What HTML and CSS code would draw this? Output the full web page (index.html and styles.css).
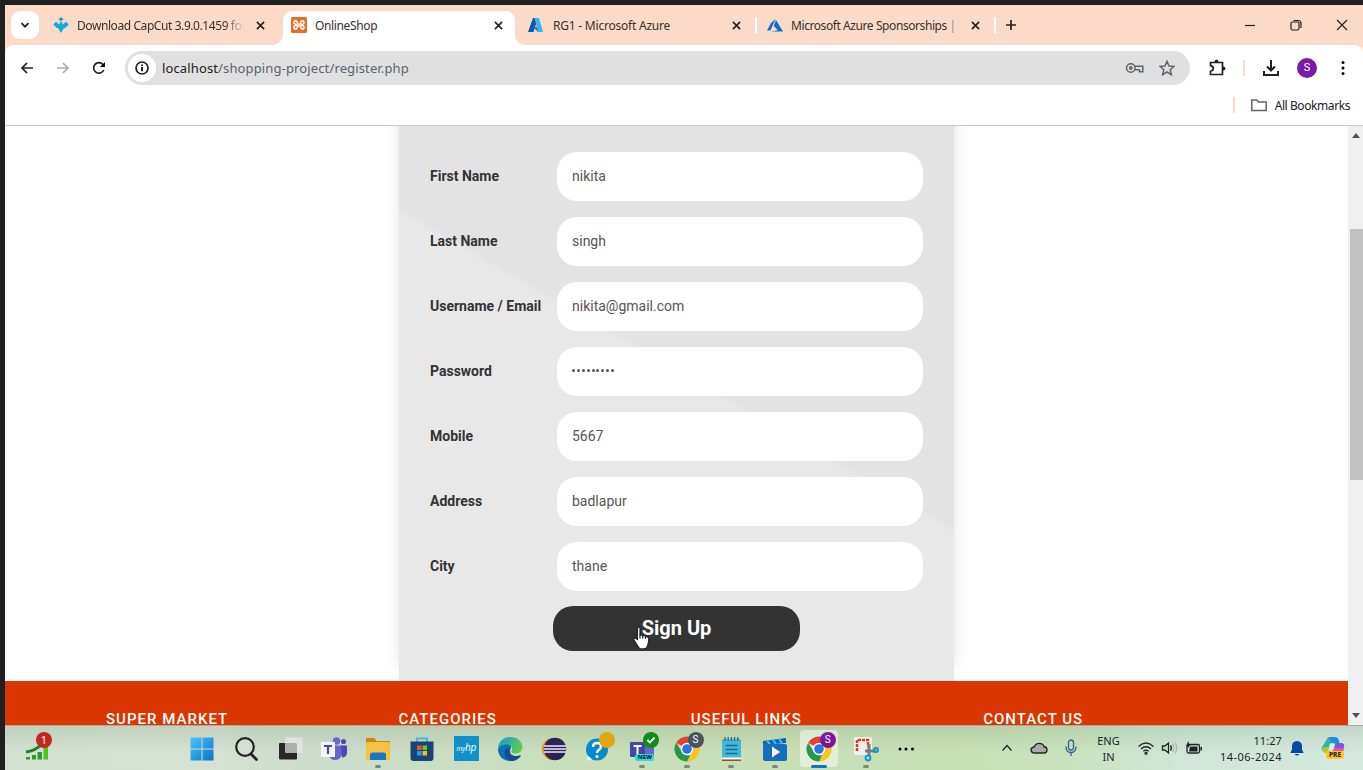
FILE: index.html
```html
<!DOCTYPE html>
<html lang="en">
<head>
<meta charset="utf-8">
<title>OnlineShop</title>
<link rel="stylesheet" href="styles.css">
</head>
<body>
<div class="window">
  <header class="tabs">
    <button class="tab-search"><svg width="12" height="12" viewBox="0 0 12 12"><path d="M2.500 4.200 6 7.700l3.500-3.500" class="ln2"/></svg></button>
    <div class="tab tab-first">
      <svg class="fav" viewBox="0 0 16 16"><path fill="#13a9d8" d="m8 0 2.500 2.300L8 4.600 5.500 2.300zM.300 7.500 3 4.800l2.800 2.400h1V5h2.400v2.200h1L13 4.800l2.700 2.700-3.500 3.500H11L8 16l-3-5H3.800z"/></svg>
      <span class="tab-title fade t1">Download CapCut 3.9.0.1459 for</span>
      <svg class="x" viewBox="0 0 10 10"><path d="m1 1 8 8M9 1 1 9"/></svg>
    </div>
    <div class="tab tab-active">
      <svg class="fav" viewBox="0 0 16 16"><rect width="16" height="16" rx="1.500" fill="#e56f20"/><path d="M6.300 7V5.300a1.700 1.700 0 1 0-1.900 1.900L5.300 8l-.9.800a1.700 1.700 0 1 0 1.900 1.900V9h3.400v1.700a1.700 1.700 0 1 0 1.900-1.900L10.700 8l.9-.8a1.700 1.700 0 1 0-1.900-1.900V7z" fill="none" stroke="#fff" stroke-width="1.500"/></svg>
      <span class="tab-title t2">OnlineShop</span>
      <svg class="x" viewBox="0 0 10 10"><path d="m1 1 8 8M9 1 1 9"/></svg>
    </div>
    <div class="tab tab-third">
      <svg class="fav" viewBox="0 0 16 16"><path fill="#1257a5" d="M5 1h5L5.500 15H0z"/><path fill="#1779d4" d="M5 10h7l2 5h-4z"/><path fill="#38b7ee" d="M6.500 1H11l4 14h-5z"/></svg>
      <span class="tab-title t3">RG1 - Microsoft Azure</span>
      <svg class="x" viewBox="0 0 10 10"><path d="m1 1 8 8M9 1 1 9"/></svg>
    </div>
    <i class="tab-sep"></i>
    <div class="tab tab-fourth">
      <svg class="fav" viewBox="0 0 16 16"><path fill="#0b72d0" d="M8.500 2 4 6 0 13.500h3.500zM9 3 6.700 8.800l4 4.500L4 14.500h12z"/></svg>
      <span class="tab-title t4">Microsoft Azure Sponsorships <em>|</em></span>
      <svg class="x" viewBox="0 0 10 10"><path d="m1 1 8 8M9 1 1 9"/></svg>
    </div>
    <i class="tab-sep"></i>
    <svg class="plus" width="12" height="12" viewBox="0 0 12 12"><path class="ln2" d="M6 1v10M1 6h10"/></svg>
    <div class="controls">
      <svg viewBox="0 0 12 12"><path d="M1 6.500h10"/></svg>
      <svg viewBox="0 0 12 12"><rect x="1" y="3" width="8" height="8" rx="1.500"/><path d="M3.500 1.500H8A3 3 0 0 1 11 4.500V9"/></svg>
      <svg viewBox="0 0 12 12"><path d="m1 1 10 10M11 1 1 11"/></svg>
    </div>
  </header>

  <nav class="toolbar">
    <div class="navs">
      <svg viewBox="0 0 16 16"><path class="ln2" d="M14 8H3M8 3 3 8l5 5"/></svg>
      <svg class="dim" viewBox="0 0 16 16"><path class="ln2" d="M2 8h11M8 3l5 5-5 5"/></svg>
      <svg viewBox="0 0 16 16"><path class="ln2" d="M12.800 10A5.300 5.300 0 1 1 12 4.500L13.500 6"/><path d="M14 2v5H9z"/></svg>
    </div>
    <div class="omnibox">
      <span class="info"><svg width="16" height="16" viewBox="0 0 16 16"><circle cx="8" cy="8" r="6" class="ln2"/><path d="M7.200 7h1.700v4.300H7.200zM7.200 4.500h1.700V6H7.200z"/></svg></span>
      <span class="url"><b>localhost</b>/shopping-project/register.php</span>
      <svg class="key" width="20" height="12" viewBox="0 0 20 12"><circle cx="5.800" cy="6" r="4.300"/><circle cx="5.800" cy="6" r="1.200"/><path d="M9.600 4.200h8.200v5.500h-3.300V7.800H9.800"/></svg>
      <svg class="star" width="16" height="16" viewBox="0 0 16 16"><path d="m8 1.300 2 4.700 5 .4-3.800 3.300 1.200 5L8 12l-4.400 2.700 1.200-5L1 6.400 6 6z"/></svg>
    </div>
    <svg class="puzzle" width="18" height="18" viewBox="0 0 18 18"><path d="M2.500 3.500h12v12h-12v-3.300q2.800-.7 2.800-2.800t-2.800-2.800z"/><path class="fill" d="M6.500 3q0-2.500 2-2.500t2 2.500zM15 7.500q2.500 0 2.500 2t-2.500 2z"/></svg>
    <i class="bar-sep"></i>
    <svg class="download" width="18" height="18" viewBox="0 0 18 18"><path d="M9 1v10M5 7.500 9 11.500l4-4M2 12v4h14v-4"/></svg>
    <span class="avatar">S</span>
    <svg class="dots" width="6" height="16" viewBox="0 0 6 16"><circle cx="3" cy="2.500" r="1.500"/><circle cx="3" cy="8" r="1.500"/><circle cx="3" cy="13.500" r="1.500"/></svg>
  </nav>

  <div class="bookmarks">
    <i class="bar-sep"></i>
    <svg width="18" height="14" viewBox="0 0 18 14"><path d="M1.800 2h5l2 2h7.400v8.500H1.800z"/></svg>
    <span>All Bookmarks</span>
  </div>

  <main class="viewport">
    <div class="page">
      <section class="form-area">
        <form class="card">
          <label class="row"><span>First Name</span><input type="text" value="nikita"></label>
          <label class="row"><span>Last Name</span><input type="text" value="singh"></label>
          <label class="row"><span>Username / Email</span><input type="text" value="nikita@gmail.com"></label>
          <label class="row"><span>Password</span><span class="field"><i></i><i></i><i></i><i></i><i></i><i></i><i></i><i></i><i></i></span></label>
          <label class="row"><span>Mobile</span><input type="text" value="5667"></label>
          <label class="row"><span>Address</span><input type="text" value="badlapur"></label>
          <label class="row"><span>City</span><input type="text" value="thane"></label>
          <button type="button" class="signup">Sign Up
            <svg class="cursor" width="18" height="25" viewBox="0 0 18 25"><path d="M4.500 1.500q2-1 2.500 1V9l2 .2 2 .5 2 .5 2.300 1.300q.7 1 .4 3l-.7 4-1.500 3.500-4 1-3-.5-2-3L1 14q-.5-2 1-2l2.500 1.500z"/><path class="finger" d="M7 8.500v4M9.700 9v3.500M12.500 10v3"/></svg>
          </button>
        </form>
      </section>
      <footer class="footer">
        <h3>SUPER MARKET</h3><h3>CATEGORIES</h3><h3>USEFUL LINKS</h3><h3>CONTACT US</h3>
      </footer>
    </div>
    <aside class="scroll"><i class="up"></i><i class="thumb"></i><i class="down"></i></aside>
  </main>

  <div class="taskbar">
    <div class="widget">
      <svg width="30" height="32" viewBox="0 0 30 32"><path fill="#2c9b2b" d="M2 28h4v2.500H2zM8 26h4v4.500H8zM13.500 23h4.500v7.500h-4.500z"/><path fill="#4dc51e" d="M19.500 18H24v12.500h-4.500z"/><path d="M2 23q9-1 16-8" fill="none" stroke="#17842d" stroke-width="3"/></svg>
      <span class="count">1</span>
    </div>
    <div class="apps">
      <span class="app"><svg viewBox="0 0 26 26"><defs><linearGradient id="win" x2="1" y2="1"><stop stop-color="#4dc6f4"/><stop offset="1" stop-color="#0872ce"/></linearGradient></defs><path fill="url(#win)" d="M1.500 1.500h11v11h-11zM13.500 1.500h11v11h-11zM1.500 13.500h11v11h-11zM13.500 13.500h11v11h-11z"/></svg></span>
      <span class="app"><svg viewBox="0 0 26 26"><circle cx="12" cy="11" r="8.800" fill="#d4dfd3" stroke="#222" stroke-width="2.200"/><path d="m18 18 5.500 5.500" stroke="#222" stroke-width="2.800" stroke-linecap="round"/></svg></span>
      <span class="app"><svg viewBox="0 0 26 26"><rect x="2" y="7" width="18" height="16.500" rx="1" fill="#272727"/><rect x="8" y="1.500" width="17.500" height="15.500" rx="1" fill="#e8e8e8" opacity=".7"/></svg></span>
      <span class="app"><svg viewBox="0 0 26 26"><circle cx="15.500" cy="5" r="3.700" fill="#6668d0"/><circle cx="22.500" cy="5.500" r="2.600" fill="#4c50b6"/><path fill="#6366ca" d="M9 9.500h12V19q-2 5-7 5t-6-5z"/><path fill="#474bb0" d="M20 9.500h6v8q-1 4-5 4z"/><rect y="6" width="14" height="15" fill="#f4f4fb"/><path d="M3 10h8M7 10v8" stroke="#4549ad" stroke-width="2.200"/></svg></span>
      <span class="app run"><svg viewBox="0 0 26 26"><path fill="#c98910" d="M1 2h8l3 3h13v6H1z"/><rect x="1" y="6" width="24" height="18" rx="1" fill="#f5c143"/><path fill="#1876c7" d="M5 24v-5q0-2.500 2.500-2.500h11q2.500 0 2.500 2.500v5z"/></svg></span>
      <span class="app"><svg viewBox="0 0 26 26"><path d="M8 6V2.500h10V6" fill="none" stroke="#44b9e9" stroke-width="2"/><path fill="#174570" d="M1.500 5.500h23V22q0 3-3 3h-17q-3 0-3-3z"/><path fill="#f0502f" d="M8 9.500h4.500V14H8z"/><path fill="#75bd31" d="M13.500 9.500H18V14h-4.500z"/><path fill="#1da3e2" d="M8 15h4.500v4.500H8z"/><path fill="#f8be23" d="M13.500 15H18v4.500h-4.500z"/></svg></span>
      <span class="app"><span class="hp"><small>my</small>hp</span></span>
      <span class="app"><svg viewBox="0 0 26 26"><defs><linearGradient id="edge" x2="1" y2=".5"><stop stop-color="#1597d8"/><stop offset="1" stop-color="#5ecb52"/></linearGradient></defs><path fill="#0e6cba" d="M1 13c0 7 5 12 12 12 5 0 9-2 11-6-3 2-11 2-11-4 0-2 2-3 1-5-3-4-11-3-13 3z"/><path fill="#164a8d" d="M10 12c-4 3-3 11 4 13 4 0 8-2 10-6-4 2-13 2-11-5z"/><path fill="url(#edge)" d="M1 13C1 6 6 1 13 1c8 0 12.500 5 12.500 10 0 4-3 6.500-7 6.500-3 0-5-1-4-2.500 2-2 0-6-4-6.500-4-.5-8 1.500-9.500 4.500z"/></svg></span>
      <span class="app"><svg viewBox="0 0 26 26"><circle cx="11.800" cy="13" r="11" fill="#ed962b"/><circle cx="14" cy="13" r="11.200" fill="#2c2255"/><path d="M3 10h22M3 13h22M3 16h22" stroke="#eeebf4" stroke-width="1.700"/></svg></span>
      <span class="app"><svg viewBox="0 0 26 26"><circle cx="12" cy="13.500" r="11" fill="#078acb"/><path d="M8 11q0-4 4-4t4 3.500q0 2-2 3.200-2 1.300-2 3.300" fill="none" stroke="#fff" stroke-width="2.500"/><circle cx="12" cy="20.500" r="1.600" fill="#fff"/><path fill="#eef8fc" d="m3 20-2 5 6-2z"/></svg><b class="badge gold"></b></span>
      <span class="app run"><svg viewBox="0 0 26 26"><circle cx="18" cy="5" r="4" fill="#676acd"/><path fill="#6669cb" d="M11 9h14v10q-1 4-6 4t-8-4z"/><rect x="1" y="6" width="15" height="15" rx="1" fill="#4347a9"/><path d="M4.500 10h8M8.500 10v8" stroke="#fff" stroke-width="2"/></svg><b class="badge green"><svg viewBox="0 0 10 10"><path d="m2 5 2 2 4-4"/></svg></b><small class="new">NEW</small></span>
      <span class="app run"><svg viewBox="0 0 26 26"><g id="chrome"><path fill="#e63e31" d="M13 13 2.200 6.700A12.500 12.500 0 0 1 23.800 6.700z"/><path fill="#fac51c" d="M13 7h11a12.500 12.500 0 0 1-10.800 18.500L18 15z"/><path fill="#26974b" d="M13.200 25.500A12.500 12.500 0 0 1 2.200 6.700L8 16q2 4 8 3z"/><circle cx="13" cy="13" r="6.200" fill="#fff"/><circle cx="13" cy="13" r="4.800" fill="#2977e5"/></g></svg><b class="badge slate">S</b></span>
      <span class="app run"><svg viewBox="0 0 26 26"><rect x="4" y="3" width="19" height="20" rx="1.500" fill="#43b8df"/><path d="M7 1v4M10.200 1v4M13.400 1v4M16.600 1v4M19.800 1v4" stroke="#276e85" stroke-width="1.300"/><path d="M7.500 9.500h12M7.500 13.500h12M7.500 17.500h12" stroke="#176b91" stroke-width="1.500"/><path fill="#fff" d="M4 21.500h19v2H4z"/><path fill="#9b4d25" d="M4 23.500h19V25H4z"/></svg></span>
      <span class="app run"><svg viewBox="0 0 26 26"><path fill="#096aaf" d="m1 5 23-3v5L1 9z"/><path d="m5 5 3 3m3-4 3 4m3-5 3 4" stroke="#44c3e9" stroke-width="2"/><rect x="1" y="8" width="24" height="17" rx="2" fill="#176db9"/><path fill="#fff" d="m10 10.500 8 5.500-8 5.500z"/></svg></span>
      <span class="app run current"><svg viewBox="0 0 26 26"><use href="#chrome"/></svg><b class="badge purple">S</b></span>
      <span class="app run snip"><svg viewBox="0 0 26 26"><rect x="1" y="1" width="18" height="18" rx="2" fill="#f4efec"/><path d="M4 15V4h11v7" fill="none" stroke="#d73b1c" stroke-width="2.500" stroke-dasharray="3 1"/><path d="M12 15h11M16 8v12" stroke="#777f86" stroke-width="3"/><circle cx="15" cy="22" r="2.400" fill="none" stroke="#1596d1" stroke-width="2"/><circle cx="23" cy="14" r="2" fill="none" stroke="#1596d1" stroke-width="2"/></svg></span>
      <span class="app more"><svg viewBox="0 0 26 26"><circle cx="7" cy="13" r="1.500"/><circle cx="13" cy="13" r="1.500"/><circle cx="19.500" cy="13" r="1.500"/></svg></span>
    </div>
    <div class="tray">
      <svg class="tray-up" width="12" height="12" viewBox="0 0 12 12"><path d="m1.500 8.500 4.500-5 4.500 5"/></svg>
      <svg class="cloud" width="18" height="12" viewBox="0 0 18 12"><path d="M4 11Q1 10.500 1 8t3-3q2-4 5.500-3.700Q13 1.300 14 4.500q3 .5 3 3.500t-3 3z"/></svg>
      <svg class="mic" width="14" height="18" viewBox="0 0 14 18"><rect x="4.500" y="1" width="5" height="10" rx="2.500"/><path d="M2 7.500q0 6 5 6t5-6M7 13.500V17"/></svg>
      <span class="lang">ENG<br>IN</span>
      <svg class="wifi" width="18" height="14" viewBox="0 0 18 14"><path d="M1.500 5.500Q9-1.500 16.500 5.500M4 8q5-4.500 10 0M6.300 10.300q2.700-2.300 5.400 0"/><circle cx="9" cy="12.200" r="1"/></svg>
      <svg class="sound" width="18" height="14" viewBox="0 0 18 14"><path d="M1.500 5h2.300L7.500 2v10L3.800 9H1.500zM9.500 4.500q1.800 2.500 0 5"/><path class="faint" d="M11.500 3q3 4 0 8M14 1.500q3.500 5.500 0 11"/></svg>
      <svg class="battery" width="18" height="14" viewBox="0 0 18 14"><rect x="2" y="3.500" width="12.500" height="8.500" rx="1.500"/><path class="fill" d="M5 5.500h7.500v5H4zM15.500 6h1.500v3.500h-1.500zM3.500 0 1 5h2L1.800 8 6 3.500H4z"/></svg>
      <span class="clock"><span class="time">11:27</span><br>14-06-2024</span>
      <svg class="bell" width="14" height="17" viewBox="0 0 14 17"><path fill="#0749a0" d="M7 1q5 .3 5 5v3.500l1.700 3.500H.300L2 9.500V6Q2 1.300 7 1zM4.500 14h5q-2.500 3-5 0z"/></svg>
      <span class="copilot"><svg width="24" height="22" viewBox="0 0 24 22"><path fill="#1791dc" d="M6 2q1-2 3-2h5q3 0 4 4l.5 3H9z"/><path fill="#2eb5a9" d="M6 2q2-1 4 1L7 13H1q-1-2 0-3z"/><path fill="#aac744" d="M2 10h6l-2 6H4q-4-1-2-6z"/><path fill="#7b55e3" d="M14 6h7q3 1 2 4l-1 3h-9z"/><path fill="#e551a4" d="M13 11h10q-1 7-5 7h-8z"/><path fill="#e8a53b" d="m5 13 6 1-1 4H6q-2-2-1-5z"/><path fill="#d8ebdf" d="m9.500 6 4.500.5-2.500 7-4-.5z"/></svg><small>PRE</small></span>
    </div>
  </div>
</div>
</body>
</html>
```

FILE: styles.css
```css
* { box-sizing: border-box; }
body { margin: 0; background: #202020; font-family: "Noto Sans", "Open Sans", sans-serif; color: #222; overflow: hidden; }
button { border: 0; padding: 0; }
svg { display: block; flex: none; }
.window { display: flex; flex-direction: column; width: 1363px; height: 770px; padding: 5px 0 0 5px; }
.ln2 { fill: none; stroke: currentColor; stroke-width: 1.700; }

.tabs { height: 40px; flex: none; display: flex; align-items: center; background: #fcdac8; padding-left: 6px; }
.tab-search { width: 28px; height: 28px; border-radius: 9px; background: #fff; display: grid; place-items: center; color: #222; }
.tab { display: flex; align-items: center; height: 34px; font-size: 12px; color: #3a302d; }
.fav { width: 16px; height: 16px; margin-right: 8px; }
.tab-title { flex: 1; white-space: nowrap; overflow: hidden; line-height: 18px; padding-top: 1px; }
.tab-title em { font-style: normal; color: #9c8780; }
.fade { -webkit-mask-image: linear-gradient(90deg, #000 88%, transparent); mask-image: linear-gradient(90deg, #000 88%, transparent); }
.x { width: 9px; height: 9px; fill: none; stroke: #222; stroke-width: 1.800; }
.tab-first { width: 230px; margin-left: 14px; padding-right: 17px; }
.tab-first .fade { flex: 0 0 167px; margin-right: 12px; }
.tab-active { position: relative; align-self: flex-end; width: 232px; padding: 0 12px 6px 8px; background: #fff; border-radius: 9px 9px 0 0; }
.tab-active::before, .tab-active::after { content: ""; position: absolute; bottom: 0; width: 10px; height: 10px; }
.tab-active::before { left: -10px; background: radial-gradient(circle at 0 0, transparent 9.500px, #fff 10px); }
.tab-active::after { right: -10px; background: radial-gradient(circle at 100% 0, transparent 9.500px, #fff 10px); }
.tab-third { width: 240px; padding: 0 14px 0 14px; }
.tab-third .fav { margin-left: -1px; margin-right: 9px; }
.tab-sep { width: 2px; height: 16px; background: #fff; }
.tab-fourth { width: 237px; padding: 0 14px 0 10px; }
.plus { margin-left: 9px; }
.controls { margin-left: auto; display: flex; gap: 34px; padding-right: 15px; }
.controls svg { width: 12px; height: 12px; fill: none; stroke: #222; stroke-width: 1.200; }
.t1 { letter-spacing: -.42px; }
.t2 { letter-spacing: -.36px; }
.t3 { letter-spacing: -.22px; }
.t4 { letter-spacing: -.42px; }

.toolbar { flex: none; height: 46px; background: #fff; border-radius: 8px 8px 0 0; display: flex; align-items: center; box-shadow: 0 -8px #fcdac8; clip-path: inset(0); }
.navs { display: flex; gap: 20px; width: 120px; padding-left: 14px; }
.navs svg { width: 16px; height: 16px; }
.dim { color: #aaa; }
.omnibox { width: 1065px; height: 34px; border-radius: 17px; background: #e0e0e0; display: flex; align-items: center; padding: 0 15px 0 3px; }
.info { width: 28px; height: 28px; border-radius: 50%; background: #fff; display: grid; place-items: center; }
.url { flex: 1; margin-left: 6px; font-size: 13px; letter-spacing: .13px; color: #566370; }
.url b { font-weight: 400; color: #202124; }
.key, .star { fill: none; stroke: #61666b; stroke-width: 1.500; }
.star { margin-left: 14px; }
.puzzle { margin-left: 18px; fill: none; stroke: #202020; stroke-width: 1.700; }
.puzzle .fill { fill: #202020; stroke: none; }
.bar-sep { width: 2px; height: 16px; background: #fcdac8; }
.toolbar .bar-sep { margin-left: 17px; }
.download { margin-left: 17px; fill: none; stroke: #202020; stroke-width: 2; }
.avatar { width: 20px; height: 20px; margin-left: 17px; border-radius: 50%; background: #7a1ba3; color: #fff; font: 11px/20px Roboto, sans-serif; text-align: center; }
.dots { margin-left: 23px; }
.bookmarks { flex: none; height: 35px; background: #fff; border-bottom: 1px solid #c9c9c9; display: flex; align-items: center; justify-content: flex-end; padding: 0 13px 7px 0; font-size: 12px; }
.bookmarks svg { margin: 0 7px 0 15px; fill: none; stroke: #656565; stroke-width: 1.500; }
.bookmarks span { letter-spacing: -.42px; padding-top: 1px; }

.viewport { flex: none; height: 599px; display: flex; background: #fff; overflow: hidden; font-family: Roboto, sans-serif; }
.page { width: 1343px; }
.form-area { height: 555px; overflow: hidden; }
.card { width: 555px; height: 555px; margin-left: 394px; padding: 25px 31px 30px; background: linear-gradient(30deg, #e8e8e8 53.400%, #e3e3e3 54.200%); box-shadow: 0 -15px 14px rgba(0,0,0,.12); }
.row { display: flex; align-items: center; height: 50px; margin-bottom: 15px; font-size: 14px; font-weight: 700; color: #333; }
.row > span:first-child { width: 127px; white-space: nowrap; }
.row input, .field { width: 366px; height: 49px; border: 0; outline: 0; border-radius: 20px; background: #fff; padding: 0 15px; font: 14px Roboto, sans-serif; color: #555; }
.field { display: flex; align-items: center; gap: 1.900px; padding-bottom: 1px; }
.field i { width: 3px; height: 3px; border-radius: 50%; background: #555; }
.signup { position: relative; display: block; width: 247px; height: 45px; margin-left: 123px; border-radius: 20px; background: #333; color: #fff; font: 700 20px/45px Roboto, sans-serif; }
.cursor { position: absolute; left: 80px; top: 20px; fill: #fff; stroke: #20222e; stroke-width: 1.200; }
.finger { fill: none; }
.footer { height: 44px; background: #db3500; display: grid; grid-template-columns: repeat(4, 292.400px); padding: 32px 0 0 101px; }
.footer h3 { margin: 0; color: #fff; font-size: 15px; font-weight: 500; line-height: 12px; letter-spacing: 1.020px; }
.scroll { width: 15px; display: flex; flex-direction: column; align-items: center; background: #f0f0f0; }
.up, .down { width: 0; height: 0; border: 4px solid transparent; }
.up { border-bottom: 5px solid #505050; border-top: 0; margin-top: 7px; }
.thumb { width: 13px; height: 251px; margin-top: 91px; align-self: flex-end; background: #c1c1c1; }
.down { border-top: 5px solid #505050; border-bottom: 0; margin-top: auto; margin-bottom: 7px; }

.taskbar { flex: none; height: 45px; display: flex; border-top: 1px solid #a5af98; background: linear-gradient(180deg, rgba(130,150,120,.22), transparent 60%), linear-gradient(90deg, #d2e0d1 0, #d5e2d2 15%, #cddccd 22%, #c8dfba 42%, #c7e0b5 70%, #c8e2bd 78%, #d0e6d8 87%, #d4e9dd 100%); }
.widget { position: relative; width: 174px; padding: 3px 0 0 19px; }
.count { position: absolute; left: 31px; top: 6px; width: 16px; height: 16px; border-radius: 50%; background: #c52620; color: #fff; font-size: 11px; line-height: 16px; text-align: center; }
.apps { display: flex; width: 751px; }
.app { position: relative; width: 44.100px; height: 44px; flex: none; display: flex; justify-content: center; padding-top: 10px; left: .5px; }
.app > svg { width: 26px; height: 26px; }
.run::after { content: ""; position: absolute; bottom: 2px; left: 19px; width: 6px; height: 3px; border-radius: 2px; background: #7c8775; }
.current::before { content: ""; position: absolute; inset: 4px 3px 3px; border-radius: 4px; background: rgba(255,255,255,.48); }
.current > svg { position: relative; }
.current::after { left: 14px; width: 16px; background: #1473c8; }
.snip { margin-left: 3px; }
.more { width: 36px; }
.hp { width: 25px; height: 25px; background: #0f91c9; color: #fff; font: italic 10px/23px "Open Sans", sans-serif; letter-spacing: -.3px; text-align: center; white-space: nowrap; }
.hp small { font-size: 7px; }
.badge { position: absolute; left: 23px; top: 6px; width: 16px; height: 16px; border-radius: 50%; color: #fff; font: 10px/16px Roboto, sans-serif; text-align: center; }
.gold { background: #e0a515; }
.green { background: #118c18; }
.green svg { width: 12px; height: 12px; margin: 2px; fill: none; stroke: #fff; stroke-width: 1.500; }
.slate { background: #485460; }
.purple { background: #7a1899; }
.new { position: absolute; left: 15px; top: 28px; width: 19px; height: 7px; border-radius: 2px; background: #28dce7; color: #111; font-size: 6px; line-height: 7px; font-weight: 800; text-align: center; }
.tray { flex: 1; display: flex; align-items: center; padding-left: 71px; color: #20252a; font-size: 11px; line-height: 16px; }
.tray svg { fill: none; stroke: #20252a; stroke-width: 1.300; }
.tray .cloud { margin-left: 17px; fill: #a9aaa9; }
.tray .mic { margin-left: 16px; stroke: #28639b; }
.lang { width: 37px; text-align: center; margin-left: 12px; margin-top: 2px; }
.tray .wifi { margin-left: 10px; }
.tray .sound { margin-left: 6px; }
.tray .sound .faint { stroke: #a9b9ad; }
.tray .battery { margin-left: 6px; }
.tray .battery .fill { fill: #222; stroke: none; }
.clock { width: 74px; margin-left: 5px; text-align: right; white-space: nowrap; letter-spacing: .45px; margin-top: 1px; }
.time { letter-spacing: .1px; }
.tray .bell { margin-left: 8px; stroke: none; }
.copilot { position: relative; margin-left: 17px; }
.tray .copilot svg { stroke: none; }
.copilot small { position: absolute; left: 5px; top: 14px; width: 18px; height: 8px; border-radius: 2px; background: #ffc522; font-size: 6.500px; line-height: 8px; font-weight: 800; text-align: center; }
```
